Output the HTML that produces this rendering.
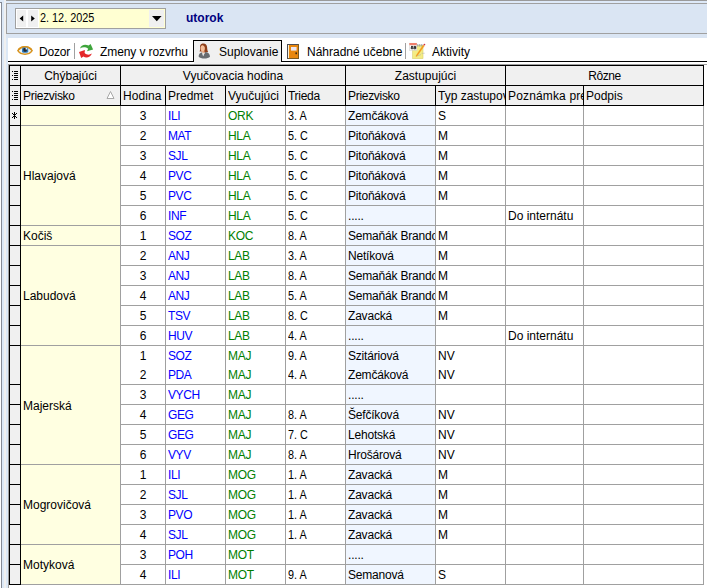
<!DOCTYPE html>
<html><head><meta charset="utf-8"><title>Suplovanie</title>
<style>
html,body{margin:0;padding:0;background:#fff;}
body{width:707px;height:588px;position:relative;overflow:hidden;font-family:"Liberation Sans",sans-serif;font-size:12px;color:#000;}
body>div,body>svg{position:absolute;}
.t{white-space:nowrap;}
.c{text-align:center;}
.clip{overflow:hidden;}
.blue{color:#0000ff;}
.green{color:#008000;}
.tab{font-size:12px;}
</style></head><body>
<div style="left:0px;top:0px;width:707px;height:588px;background:#fff;"></div>
<div style="left:0px;top:0px;width:2px;height:2px;background:#dce8f6;"></div>
<div style="left:0px;top:2px;width:2px;height:1px;background:#858a95;"></div>
<div style="left:1px;top:2px;width:1px;height:586px;background:#858a95;"></div>
<div style="left:2px;top:0px;width:2px;height:588px;background:#dce8f6;"></div>
<div style="left:4px;top:0px;width:2px;height:588px;background:#f0f0f0;"></div>
<div style="left:6px;top:0px;width:2px;height:588px;background:#dce8f6;"></div>
<div style="left:6px;top:0px;width:701px;height:1px;background:#9a9a9a;"></div>
<div style="left:6px;top:1px;width:701px;height:2px;background:#dde9f8;"></div>
<div style="left:6px;top:3px;width:701px;height:1px;background:#a0a0a0;"></div>
<div style="left:6px;top:4px;width:1px;height:30px;background:#a0a0a0;"></div>
<div style="left:7px;top:4px;width:700px;height:29px;background:#dae5f3;"></div>
<div style="left:6px;top:33px;width:701px;height:1px;background:#a0a0a0;"></div>
<div style="left:6px;top:34px;width:701px;height:4px;background:#dae5f3;"></div>
<div style="left:15px;top:8px;width:151px;height:21px;background:#a0a0a0;"></div>
<div style="left:16px;top:9px;width:149px;height:19px;background:#ffffd2;"></div>
<div style="left:16px;top:9px;width:23px;height:19px;background:#fff;"></div>
<div style="left:17px;top:10px;width:9px;height:17px;background:#f0f0f0;"></div>
<div style="left:28px;top:10px;width:10px;height:17px;background:#f0f0f0;"></div>
<div style="left:149px;top:10px;width:15px;height:17px;background:#f0f0f0;"></div>
<svg style="left:0;top:0" width="707" height="40"><path d="M19.6 18.5 L23.2 15.4 L23.2 21.6Z M34.8 18.5 L31.2 15.4 L31.2 21.6Z M152 16 L161.6 16 L156.8 21.2Z" fill="#000"/></svg>
<div class="t " style="left:40px;top:9px;width:100px;height:19px;line-height:19px;font-size:12px;transform:scaleX(0.905);transform-origin:0 0">2. 12. 2025</div>
<div class="t " style="left:186px;top:9px;width:60px;height:19px;line-height:19px;font-weight:bold;color:#000080;font-size:12px">utorok</div>
<div style="left:8px;top:61px;width:699px;height:1px;background:#000;"></div>
<div style="left:193px;top:40px;width:89px;height:22px;background:#000;"></div>
<div style="left:194px;top:41px;width:87px;height:24px;background:#f0f0f0;"></div>
<div style="left:194px;top:62px;width:87px;height:1px;background:#f0f0f0;"></div>
<div style="left:74px;top:43px;width:1px;height:16px;background:#a0a0a0;"></div>
<div style="left:405px;top:43px;width:1px;height:16px;background:#a0a0a0;"></div>
<div class="t tab" style="left:39px;top:43px;width:40px;height:19px;line-height:19px;letter-spacing:-0.2px">Dozor</div>
<div class="t tab" style="left:100px;top:43px;width:100px;height:19px;line-height:19px;letter-spacing:-0.1px">Zmeny v rozvrhu</div>
<div class="t tab" style="left:219px;top:43px;width:70px;height:19px;line-height:19px;">Suplovanie</div>
<div class="t tab" style="left:307px;top:43px;width:100px;height:19px;line-height:19px;">Náhradné učebne</div>
<div class="t tab" style="left:432px;top:43px;width:60px;height:19px;line-height:19px;">Aktivity</div>
<svg style="left:0;top:0" width="707" height="66" viewBox="0 0 707 66">
<!-- eye -->
<path d="M17.9 50.6 C21 45.6 29 45.6 32.1 50.6 C29 55.3 21 55.3 17.9 50.6Z" fill="#e4f1fb" stroke="#d8921c" stroke-width="1.5"/>
<path d="M18.8 49.4 C21.8 46 28.2 46 31.2 49.4" fill="none" stroke="#d8921c" stroke-width="1.6"/>
<rect x="22" y="47.4" width="6.2" height="5.4" rx="1.6" fill="#2f7ec2"/>
<rect x="23.4" y="48" width="3.4" height="3.8" rx="1.2" fill="#23282e"/>
<rect x="25.6" y="47.8" width="1.6" height="1.7" fill="#e8eef4"/>
<!-- refresh -->
<path d="M80.1 48.4 C80.8 45 85.2 43.8 88.6 45.6 L90.6 44 L93.1 49.6 L87 51.2 L88.2 48.7 C85.6 46.9 82.4 47 80.1 48.4Z" fill="#3fa53c"/>
<path d="M91.9 53.6 C90.4 57.6 86 58.3 83.4 56.6 L81.2 57.9 L79 52 L84.9 50 L84.6 53 C86.6 55 89.6 55.1 91.9 53.6Z" fill="#e4282a"/>
<!-- person -->
<path d="M200.2 47.6 C199.6 44.6 201.6 43.4 203.4 43.5 C205.6 43.5 207 45 207.1 47.2 C207.2 49.6 207.6 51 208.2 52 L204.6 52.6 L201.6 51.6 L199.6 51.6 C200.2 50.4 200.4 49 200.2 47.6Z" fill="#8f3f1a"/>
<path d="M200.7 47.2 C200.9 45.6 202.2 45.2 203.2 45.4 C204.4 45.8 205 47 204.9 48.6 C204.8 50.6 203.8 52 202.8 52 C201.6 52 200.5 50 200.7 47.2Z" fill="#f6be98"/>
<path d="M202.2 51.4 L204.4 51 L204.8 53.4 L202.4 54Z" fill="#eaa57c"/>
<path d="M198.7 56.8 C198.6 53.6 200.3 52.6 202.1 52.4 L203.1 56 L205.4 52 C208.4 52.4 210 54.2 210 56.8 C208 59.2 200.6 59.2 198.7 56.8Z" fill="#686c70"/>
<path d="M202.1 52.6 L203.1 56.2 L204.6 53Z" fill="#e4e4e4"/>
<!-- door -->
<rect x="287" y="44" width="12" height="15" fill="#7a5a22"/>
<rect x="287" y="44" width="11" height="1" fill="#4c4c54"/><rect x="287" y="44" width="1" height="15" fill="#4c4c54"/>
<rect x="288" y="45" width="1" height="13" fill="#fbf3d8"/>
<rect x="289" y="45" width="9" height="13" fill="#e8870e"/>
<rect x="291" y="47" width="5.6" height="3.6" fill="#ece6f2"/>
<rect x="295.4" y="52.4" width="1.6" height="1.8" fill="#3a2a10"/>
<!-- notepad -->
<rect x="412.6" y="45.4" width="10.4" height="13.2" fill="#f3ec84" stroke="#d9d070" stroke-width="0.6"/>
<path d="M417.8 44 v2.6 M419.8 44 v2.6 M421.8 44 v2.6" stroke="#8e959c" stroke-width="0.9"/>
<rect x="409.4" y="43.2" width="7.4" height="7" fill="#fff" stroke="#c8c8c8" stroke-width="0.5"/>
<rect x="409.4" y="43" width="7.4" height="2.2" fill="#f0806c"/>
<path d="M411 46.4 h1.8 v1 h-1.6 v1.3 h1.9 M413.8 46.4 h1.9 v2.4 h-1.9 v-1.2 h1.9" fill="none" stroke="#111" stroke-width="0.9"/>
<path d="M423.1 45.1 L424.3 46 L417.2 56 L415.9 56.7 L416.2 55.3Z" fill="#f29a1e" stroke="#f29a1e" stroke-width="0.25"/>
<circle cx="424.4" cy="44.6" r="0.9" fill="#d03040"/>
<path d="M417 56 L421 54.6 M421.6 53.4 L424.8 53.2" stroke="#aaa" stroke-width="0.5"/>
</svg>
<div style="left:8px;top:64px;width:699px;height:1px;background:#a0a0a0;"></div>
<div style="left:8px;top:64px;width:1px;height:524px;background:#a0a0a0;"></div>
<div style="left:9px;top:65px;width:695px;height:41px;background:#000;"></div>
<div style="left:10px;top:66px;width:10px;height:19px;background:#f0f0f0;"></div>
<div style="left:21px;top:66px;width:99px;height:19px;background:#f0f0f0;"></div>
<div style="left:121px;top:66px;width:224px;height:19px;background:#f0f0f0;"></div>
<div style="left:346px;top:66px;width:159px;height:19px;background:#f0f0f0;"></div>
<div style="left:506px;top:66px;width:197px;height:19px;background:#f0f0f0;"></div>
<div style="left:10px;top:86px;width:10px;height:19px;background:#f0f0f0;"></div>
<div style="left:21px;top:86px;width:99px;height:19px;background:#f0f0f0;"></div>
<div style="left:121px;top:86px;width:44px;height:19px;background:#f0f0f0;"></div>
<div style="left:166px;top:86px;width:59px;height:19px;background:#f0f0f0;"></div>
<div style="left:226px;top:86px;width:59px;height:19px;background:#f0f0f0;"></div>
<div style="left:286px;top:86px;width:59px;height:19px;background:#f0f0f0;"></div>
<div style="left:346px;top:86px;width:89px;height:19px;background:#f0f0f0;"></div>
<div style="left:436px;top:86px;width:69px;height:19px;background:#f0f0f0;"></div>
<div style="left:506px;top:86px;width:77px;height:19px;background:#f0f0f0;"></div>
<div style="left:584px;top:86px;width:119px;height:19px;background:#f0f0f0;"></div>
<div class="t c" style="left:21px;top:67px;width:99px;height:19px;line-height:19px;">Chýbajúci</div>
<div class="t c" style="left:121px;top:67px;width:224px;height:19px;line-height:19px;">Vyučovacia hodina</div>
<div class="t c" style="left:346px;top:67px;width:159px;height:19px;line-height:19px;">Zastupujúci</div>
<div class="t c" style="left:506px;top:67px;width:197px;height:19px;line-height:19px;letter-spacing:-0.4px">Rôzne</div>
<div class="t clip" style="left:23px;top:87px;width:97px;height:19px;line-height:19px;letter-spacing:-0.3px">Priezvisko</div>
<div class="t clip" style="left:123px;top:87px;width:42px;height:19px;line-height:19px;letter-spacing:0.1px">Hodina</div>
<div class="t clip" style="left:168px;top:87px;width:57px;height:19px;line-height:19px;letter-spacing:0">Predmet</div>
<div class="t clip" style="left:228px;top:87px;width:57px;height:19px;line-height:19px;letter-spacing:0">Vyučujúci</div>
<div class="t clip" style="left:288px;top:87px;width:57px;height:19px;line-height:19px;letter-spacing:-0.3px">Trieda</div>
<div class="t clip" style="left:348px;top:87px;width:87px;height:19px;line-height:19px;letter-spacing:-0.3px">Priezvisko</div>
<div class="t clip" style="left:438px;top:87px;width:67px;height:19px;line-height:19px;letter-spacing:0">Typ zastupovania</div>
<div class="t clip" style="left:508px;top:87px;width:75px;height:19px;line-height:19px;letter-spacing:0.15px">Poznámka pre</div>
<div class="t clip" style="left:586px;top:87px;width:117px;height:19px;line-height:19px;letter-spacing:0">Podpis</div>
<svg style="left:12px;top:71px" width="8" height="10" shape-rendering="crispEdges"><rect x="2" y="0" width="4" height="1" fill="#000"/><rect x="0" y="0" width="1" height="1" fill="#000"/><rect x="2" y="2" width="4" height="1" fill="#000"/><rect x="2" y="4" width="4" height="1" fill="#000"/><rect x="0" y="4" width="1" height="1" fill="#000"/><rect x="2" y="6" width="4" height="1" fill="#000"/><rect x="2" y="8" width="4" height="1" fill="#000"/><rect x="0" y="8" width="1" height="1" fill="#000"/></svg>
<svg style="left:12px;top:91px" width="8" height="10" shape-rendering="crispEdges"><rect x="2" y="0" width="4" height="1" fill="#000"/><rect x="0" y="0" width="1" height="1" fill="#000"/><rect x="2" y="2" width="4" height="1" fill="#000"/><rect x="2" y="4" width="4" height="1" fill="#000"/><rect x="0" y="4" width="1" height="1" fill="#000"/><rect x="2" y="6" width="4" height="1" fill="#000"/><rect x="2" y="8" width="4" height="1" fill="#000"/><rect x="0" y="8" width="1" height="1" fill="#000"/></svg>
<svg style="left:106px;top:90px" width="10" height="10"><path d="M4.5 1.5 L8 8.5 L1 8.5Z" fill="#fff" stroke="#a8a8a8" stroke-width="1"/></svg>
<div style="left:9px;top:106px;width:695px;height:479px;background:#a0a0a0;"></div>
<div style="left:9px;top:106px;width:12px;height:479px;background:#000;"></div>
<div style="left:21px;top:106px;width:99px;height:19px;background:#ffffe1;"></div>
<div style="left:21px;top:126px;width:99px;height:99px;background:#ffffe1;"></div>
<div class="t clip" style="left:23px;top:127px;width:96px;height:99px;line-height:99px;">Hlavajová</div>
<div style="left:21px;top:226px;width:99px;height:19px;background:#ffffe1;"></div>
<div class="t clip" style="left:23px;top:227px;width:96px;height:19px;line-height:19px;">Kočiš</div>
<div style="left:21px;top:246px;width:99px;height:99px;background:#ffffe1;"></div>
<div class="t clip" style="left:23px;top:247px;width:96px;height:99px;line-height:99px;">Labudová</div>
<div style="left:21px;top:346px;width:99px;height:118px;background:#ffffe1;"></div>
<div class="t clip" style="left:23px;top:347px;width:96px;height:118px;line-height:118px;">Majerská</div>
<div style="left:21px;top:465px;width:99px;height:79px;background:#ffffe1;"></div>
<div class="t clip" style="left:23px;top:466px;width:96px;height:79px;line-height:79px;">Mogrovičová</div>
<div style="left:21px;top:545px;width:99px;height:39px;background:#ffffe1;"></div>
<div class="t clip" style="left:23px;top:546px;width:96px;height:39px;line-height:39px;">Motyková</div>
<div style="left:10px;top:106px;width:10px;height:19px;background:#f0f0f0;"></div>
<div style="left:10px;top:126px;width:10px;height:19px;background:#f0f0f0;"></div>
<div style="left:10px;top:146px;width:10px;height:19px;background:#f0f0f0;"></div>
<div style="left:10px;top:166px;width:10px;height:19px;background:#f0f0f0;"></div>
<div style="left:10px;top:186px;width:10px;height:19px;background:#f0f0f0;"></div>
<div style="left:10px;top:206px;width:10px;height:19px;background:#f0f0f0;"></div>
<div style="left:10px;top:226px;width:10px;height:19px;background:#f0f0f0;"></div>
<div style="left:10px;top:246px;width:10px;height:19px;background:#f0f0f0;"></div>
<div style="left:10px;top:266px;width:10px;height:19px;background:#f0f0f0;"></div>
<div style="left:10px;top:286px;width:10px;height:19px;background:#f0f0f0;"></div>
<div style="left:10px;top:306px;width:10px;height:19px;background:#f0f0f0;"></div>
<div style="left:10px;top:326px;width:10px;height:19px;background:#f0f0f0;"></div>
<div style="left:10px;top:346px;width:10px;height:38px;background:#f0f0f0;"></div>
<div style="left:10px;top:385px;width:10px;height:19px;background:#f0f0f0;"></div>
<div style="left:10px;top:405px;width:10px;height:19px;background:#f0f0f0;"></div>
<div style="left:10px;top:425px;width:10px;height:19px;background:#f0f0f0;"></div>
<div style="left:10px;top:445px;width:10px;height:19px;background:#f0f0f0;"></div>
<div style="left:10px;top:465px;width:10px;height:19px;background:#f0f0f0;"></div>
<div style="left:10px;top:485px;width:10px;height:19px;background:#f0f0f0;"></div>
<div style="left:10px;top:505px;width:10px;height:19px;background:#f0f0f0;"></div>
<div style="left:10px;top:525px;width:10px;height:19px;background:#f0f0f0;"></div>
<div style="left:10px;top:545px;width:10px;height:19px;background:#f0f0f0;"></div>
<div style="left:10px;top:565px;width:10px;height:19px;background:#f0f0f0;"></div>
<svg style="left:12px;top:112px" width="5" height="7" shape-rendering="crispEdges"><path d="M2 0h1v7h-1z M0 1h1v1h-1z M1 2h1v1h-1z M3 2h1v1h-1z M4 1h1v1h-1z M0 5h1v1h-1z M1 4h1v1h-1z M3 4h1v1h-1z M4 5h1v1h-1z" fill="#000"/></svg>
<div style="left:121px;top:106px;width:44px;height:19px;background:#fff;"></div>
<div class="t c" style="left:121px;top:107px;width:44px;height:19px;line-height:19px;">3</div>
<div style="left:166px;top:106px;width:59px;height:19px;background:#fff;"></div>
<div class="t clip blue" style="left:168px;top:107px;width:57px;height:19px;line-height:19px;letter-spacing:-0.4px">ILI</div>
<div style="left:226px;top:106px;width:59px;height:19px;background:#fff;"></div>
<div class="t clip green" style="left:228px;top:107px;width:57px;height:19px;line-height:19px;letter-spacing:-0.3px">ORK</div>
<div style="left:286px;top:106px;width:59px;height:19px;background:#fff;"></div>
<div class="t clip " style="left:288px;top:107px;width:57px;height:19px;line-height:19px;transform:scaleX(0.9);transform-origin:0 0">3. A</div>
<div style="left:346px;top:106px;width:89px;height:19px;background:#f0f6ff;"></div>
<div class="t clip " style="left:348px;top:107px;width:87px;height:19px;line-height:19px;letter-spacing:-0.2px">Zemčáková</div>
<div style="left:436px;top:106px;width:69px;height:19px;background:#fff;"></div>
<div class="t clip " style="left:438px;top:107px;width:67px;height:19px;line-height:19px;">S</div>
<div style="left:506px;top:106px;width:77px;height:19px;background:#fff;"></div>
<div style="left:584px;top:106px;width:119px;height:19px;background:#fff;"></div>
<div style="left:121px;top:126px;width:44px;height:19px;background:#fff;"></div>
<div class="t c" style="left:121px;top:127px;width:44px;height:19px;line-height:19px;">2</div>
<div style="left:166px;top:126px;width:59px;height:19px;background:#fff;"></div>
<div class="t clip blue" style="left:168px;top:127px;width:57px;height:19px;line-height:19px;letter-spacing:-0.4px">MAT</div>
<div style="left:226px;top:126px;width:59px;height:19px;background:#fff;"></div>
<div class="t clip green" style="left:228px;top:127px;width:57px;height:19px;line-height:19px;letter-spacing:-0.3px">HLA</div>
<div style="left:286px;top:126px;width:59px;height:19px;background:#fff;"></div>
<div class="t clip " style="left:288px;top:127px;width:57px;height:19px;line-height:19px;transform:scaleX(0.9);transform-origin:0 0">5. C</div>
<div style="left:346px;top:126px;width:89px;height:19px;background:#f0f6ff;"></div>
<div class="t clip " style="left:348px;top:127px;width:87px;height:19px;line-height:19px;letter-spacing:-0.2px">Pitoňáková</div>
<div style="left:436px;top:126px;width:69px;height:19px;background:#fff;"></div>
<div class="t clip " style="left:438px;top:127px;width:67px;height:19px;line-height:19px;">M</div>
<div style="left:506px;top:126px;width:77px;height:19px;background:#fff;"></div>
<div style="left:584px;top:126px;width:119px;height:19px;background:#fff;"></div>
<div style="left:121px;top:146px;width:44px;height:19px;background:#fff;"></div>
<div class="t c" style="left:121px;top:147px;width:44px;height:19px;line-height:19px;">3</div>
<div style="left:166px;top:146px;width:59px;height:19px;background:#fff;"></div>
<div class="t clip blue" style="left:168px;top:147px;width:57px;height:19px;line-height:19px;letter-spacing:-0.4px">SJL</div>
<div style="left:226px;top:146px;width:59px;height:19px;background:#fff;"></div>
<div class="t clip green" style="left:228px;top:147px;width:57px;height:19px;line-height:19px;letter-spacing:-0.3px">HLA</div>
<div style="left:286px;top:146px;width:59px;height:19px;background:#fff;"></div>
<div class="t clip " style="left:288px;top:147px;width:57px;height:19px;line-height:19px;transform:scaleX(0.9);transform-origin:0 0">5. C</div>
<div style="left:346px;top:146px;width:89px;height:19px;background:#f0f6ff;"></div>
<div class="t clip " style="left:348px;top:147px;width:87px;height:19px;line-height:19px;letter-spacing:-0.2px">Pitoňáková</div>
<div style="left:436px;top:146px;width:69px;height:19px;background:#fff;"></div>
<div class="t clip " style="left:438px;top:147px;width:67px;height:19px;line-height:19px;">M</div>
<div style="left:506px;top:146px;width:77px;height:19px;background:#fff;"></div>
<div style="left:584px;top:146px;width:119px;height:19px;background:#fff;"></div>
<div style="left:121px;top:166px;width:44px;height:19px;background:#fff;"></div>
<div class="t c" style="left:121px;top:167px;width:44px;height:19px;line-height:19px;">4</div>
<div style="left:166px;top:166px;width:59px;height:19px;background:#fff;"></div>
<div class="t clip blue" style="left:168px;top:167px;width:57px;height:19px;line-height:19px;letter-spacing:-0.4px">PVC</div>
<div style="left:226px;top:166px;width:59px;height:19px;background:#fff;"></div>
<div class="t clip green" style="left:228px;top:167px;width:57px;height:19px;line-height:19px;letter-spacing:-0.3px">HLA</div>
<div style="left:286px;top:166px;width:59px;height:19px;background:#fff;"></div>
<div class="t clip " style="left:288px;top:167px;width:57px;height:19px;line-height:19px;transform:scaleX(0.9);transform-origin:0 0">5. C</div>
<div style="left:346px;top:166px;width:89px;height:19px;background:#f0f6ff;"></div>
<div class="t clip " style="left:348px;top:167px;width:87px;height:19px;line-height:19px;letter-spacing:-0.2px">Pitoňáková</div>
<div style="left:436px;top:166px;width:69px;height:19px;background:#fff;"></div>
<div class="t clip " style="left:438px;top:167px;width:67px;height:19px;line-height:19px;">M</div>
<div style="left:506px;top:166px;width:77px;height:19px;background:#fff;"></div>
<div style="left:584px;top:166px;width:119px;height:19px;background:#fff;"></div>
<div style="left:121px;top:186px;width:44px;height:19px;background:#fff;"></div>
<div class="t c" style="left:121px;top:187px;width:44px;height:19px;line-height:19px;">5</div>
<div style="left:166px;top:186px;width:59px;height:19px;background:#fff;"></div>
<div class="t clip blue" style="left:168px;top:187px;width:57px;height:19px;line-height:19px;letter-spacing:-0.4px">PVC</div>
<div style="left:226px;top:186px;width:59px;height:19px;background:#fff;"></div>
<div class="t clip green" style="left:228px;top:187px;width:57px;height:19px;line-height:19px;letter-spacing:-0.3px">HLA</div>
<div style="left:286px;top:186px;width:59px;height:19px;background:#fff;"></div>
<div class="t clip " style="left:288px;top:187px;width:57px;height:19px;line-height:19px;transform:scaleX(0.9);transform-origin:0 0">5. C</div>
<div style="left:346px;top:186px;width:89px;height:19px;background:#f0f6ff;"></div>
<div class="t clip " style="left:348px;top:187px;width:87px;height:19px;line-height:19px;letter-spacing:-0.2px">Pitoňáková</div>
<div style="left:436px;top:186px;width:69px;height:19px;background:#fff;"></div>
<div class="t clip " style="left:438px;top:187px;width:67px;height:19px;line-height:19px;">M</div>
<div style="left:506px;top:186px;width:77px;height:19px;background:#fff;"></div>
<div style="left:584px;top:186px;width:119px;height:19px;background:#fff;"></div>
<div style="left:121px;top:206px;width:44px;height:19px;background:#fff;"></div>
<div class="t c" style="left:121px;top:207px;width:44px;height:19px;line-height:19px;">6</div>
<div style="left:166px;top:206px;width:59px;height:19px;background:#fff;"></div>
<div class="t clip blue" style="left:168px;top:207px;width:57px;height:19px;line-height:19px;letter-spacing:-0.4px">INF</div>
<div style="left:226px;top:206px;width:59px;height:19px;background:#fff;"></div>
<div class="t clip green" style="left:228px;top:207px;width:57px;height:19px;line-height:19px;letter-spacing:-0.3px">HLA</div>
<div style="left:286px;top:206px;width:59px;height:19px;background:#fff;"></div>
<div class="t clip " style="left:288px;top:207px;width:57px;height:19px;line-height:19px;transform:scaleX(0.9);transform-origin:0 0">5. C</div>
<div style="left:346px;top:206px;width:89px;height:19px;background:#f0f6ff;"></div>
<div class="t clip " style="left:348px;top:207px;width:87px;height:19px;line-height:19px;letter-spacing:-0.2px">.....</div>
<div style="left:436px;top:206px;width:69px;height:19px;background:#fff;"></div>
<div style="left:506px;top:206px;width:77px;height:19px;background:#fff;"></div>
<div class="t clip " style="left:508px;top:207px;width:75px;height:19px;line-height:19px;">Do internátu</div>
<div style="left:584px;top:206px;width:119px;height:19px;background:#fff;"></div>
<div style="left:121px;top:226px;width:44px;height:19px;background:#fff;"></div>
<div class="t c" style="left:121px;top:227px;width:44px;height:19px;line-height:19px;">1</div>
<div style="left:166px;top:226px;width:59px;height:19px;background:#fff;"></div>
<div class="t clip blue" style="left:168px;top:227px;width:57px;height:19px;line-height:19px;letter-spacing:-0.4px">SOZ</div>
<div style="left:226px;top:226px;width:59px;height:19px;background:#fff;"></div>
<div class="t clip green" style="left:228px;top:227px;width:57px;height:19px;line-height:19px;letter-spacing:-0.3px">KOC</div>
<div style="left:286px;top:226px;width:59px;height:19px;background:#fff;"></div>
<div class="t clip " style="left:288px;top:227px;width:57px;height:19px;line-height:19px;transform:scaleX(0.9);transform-origin:0 0">8. A</div>
<div style="left:346px;top:226px;width:89px;height:19px;background:#f0f6ff;"></div>
<div class="t clip " style="left:348px;top:227px;width:87px;height:19px;line-height:19px;letter-spacing:-0.2px">Semaňák Brando</div>
<div style="left:436px;top:226px;width:69px;height:19px;background:#fff;"></div>
<div class="t clip " style="left:438px;top:227px;width:67px;height:19px;line-height:19px;">M</div>
<div style="left:506px;top:226px;width:77px;height:19px;background:#fff;"></div>
<div style="left:584px;top:226px;width:119px;height:19px;background:#fff;"></div>
<div style="left:121px;top:246px;width:44px;height:19px;background:#fff;"></div>
<div class="t c" style="left:121px;top:247px;width:44px;height:19px;line-height:19px;">2</div>
<div style="left:166px;top:246px;width:59px;height:19px;background:#fff;"></div>
<div class="t clip blue" style="left:168px;top:247px;width:57px;height:19px;line-height:19px;letter-spacing:-0.4px">ANJ</div>
<div style="left:226px;top:246px;width:59px;height:19px;background:#fff;"></div>
<div class="t clip green" style="left:228px;top:247px;width:57px;height:19px;line-height:19px;letter-spacing:-0.3px">LAB</div>
<div style="left:286px;top:246px;width:59px;height:19px;background:#fff;"></div>
<div class="t clip " style="left:288px;top:247px;width:57px;height:19px;line-height:19px;transform:scaleX(0.9);transform-origin:0 0">3. A</div>
<div style="left:346px;top:246px;width:89px;height:19px;background:#f0f6ff;"></div>
<div class="t clip " style="left:348px;top:247px;width:87px;height:19px;line-height:19px;letter-spacing:-0.2px">Netíková</div>
<div style="left:436px;top:246px;width:69px;height:19px;background:#fff;"></div>
<div class="t clip " style="left:438px;top:247px;width:67px;height:19px;line-height:19px;">M</div>
<div style="left:506px;top:246px;width:77px;height:19px;background:#fff;"></div>
<div style="left:584px;top:246px;width:119px;height:19px;background:#fff;"></div>
<div style="left:121px;top:266px;width:44px;height:19px;background:#fff;"></div>
<div class="t c" style="left:121px;top:267px;width:44px;height:19px;line-height:19px;">3</div>
<div style="left:166px;top:266px;width:59px;height:19px;background:#fff;"></div>
<div class="t clip blue" style="left:168px;top:267px;width:57px;height:19px;line-height:19px;letter-spacing:-0.4px">ANJ</div>
<div style="left:226px;top:266px;width:59px;height:19px;background:#fff;"></div>
<div class="t clip green" style="left:228px;top:267px;width:57px;height:19px;line-height:19px;letter-spacing:-0.3px">LAB</div>
<div style="left:286px;top:266px;width:59px;height:19px;background:#fff;"></div>
<div class="t clip " style="left:288px;top:267px;width:57px;height:19px;line-height:19px;transform:scaleX(0.9);transform-origin:0 0">8. A</div>
<div style="left:346px;top:266px;width:89px;height:19px;background:#f0f6ff;"></div>
<div class="t clip " style="left:348px;top:267px;width:87px;height:19px;line-height:19px;letter-spacing:-0.2px">Semaňák Brando</div>
<div style="left:436px;top:266px;width:69px;height:19px;background:#fff;"></div>
<div class="t clip " style="left:438px;top:267px;width:67px;height:19px;line-height:19px;">M</div>
<div style="left:506px;top:266px;width:77px;height:19px;background:#fff;"></div>
<div style="left:584px;top:266px;width:119px;height:19px;background:#fff;"></div>
<div style="left:121px;top:286px;width:44px;height:19px;background:#fff;"></div>
<div class="t c" style="left:121px;top:287px;width:44px;height:19px;line-height:19px;">4</div>
<div style="left:166px;top:286px;width:59px;height:19px;background:#fff;"></div>
<div class="t clip blue" style="left:168px;top:287px;width:57px;height:19px;line-height:19px;letter-spacing:-0.4px">ANJ</div>
<div style="left:226px;top:286px;width:59px;height:19px;background:#fff;"></div>
<div class="t clip green" style="left:228px;top:287px;width:57px;height:19px;line-height:19px;letter-spacing:-0.3px">LAB</div>
<div style="left:286px;top:286px;width:59px;height:19px;background:#fff;"></div>
<div class="t clip " style="left:288px;top:287px;width:57px;height:19px;line-height:19px;transform:scaleX(0.9);transform-origin:0 0">5. A</div>
<div style="left:346px;top:286px;width:89px;height:19px;background:#f0f6ff;"></div>
<div class="t clip " style="left:348px;top:287px;width:87px;height:19px;line-height:19px;letter-spacing:-0.2px">Semaňák Brando</div>
<div style="left:436px;top:286px;width:69px;height:19px;background:#fff;"></div>
<div class="t clip " style="left:438px;top:287px;width:67px;height:19px;line-height:19px;">M</div>
<div style="left:506px;top:286px;width:77px;height:19px;background:#fff;"></div>
<div style="left:584px;top:286px;width:119px;height:19px;background:#fff;"></div>
<div style="left:121px;top:306px;width:44px;height:19px;background:#fff;"></div>
<div class="t c" style="left:121px;top:307px;width:44px;height:19px;line-height:19px;">5</div>
<div style="left:166px;top:306px;width:59px;height:19px;background:#fff;"></div>
<div class="t clip blue" style="left:168px;top:307px;width:57px;height:19px;line-height:19px;letter-spacing:-0.4px">TSV</div>
<div style="left:226px;top:306px;width:59px;height:19px;background:#fff;"></div>
<div class="t clip green" style="left:228px;top:307px;width:57px;height:19px;line-height:19px;letter-spacing:-0.3px">LAB</div>
<div style="left:286px;top:306px;width:59px;height:19px;background:#fff;"></div>
<div class="t clip " style="left:288px;top:307px;width:57px;height:19px;line-height:19px;transform:scaleX(0.9);transform-origin:0 0">8. C</div>
<div style="left:346px;top:306px;width:89px;height:19px;background:#f0f6ff;"></div>
<div class="t clip " style="left:348px;top:307px;width:87px;height:19px;line-height:19px;letter-spacing:-0.2px">Zavacká</div>
<div style="left:436px;top:306px;width:69px;height:19px;background:#fff;"></div>
<div class="t clip " style="left:438px;top:307px;width:67px;height:19px;line-height:19px;">M</div>
<div style="left:506px;top:306px;width:77px;height:19px;background:#fff;"></div>
<div style="left:584px;top:306px;width:119px;height:19px;background:#fff;"></div>
<div style="left:121px;top:326px;width:44px;height:19px;background:#fff;"></div>
<div class="t c" style="left:121px;top:327px;width:44px;height:19px;line-height:19px;">6</div>
<div style="left:166px;top:326px;width:59px;height:19px;background:#fff;"></div>
<div class="t clip blue" style="left:168px;top:327px;width:57px;height:19px;line-height:19px;letter-spacing:-0.4px">HUV</div>
<div style="left:226px;top:326px;width:59px;height:19px;background:#fff;"></div>
<div class="t clip green" style="left:228px;top:327px;width:57px;height:19px;line-height:19px;letter-spacing:-0.3px">LAB</div>
<div style="left:286px;top:326px;width:59px;height:19px;background:#fff;"></div>
<div class="t clip " style="left:288px;top:327px;width:57px;height:19px;line-height:19px;transform:scaleX(0.9);transform-origin:0 0">4. A</div>
<div style="left:346px;top:326px;width:89px;height:19px;background:#f0f6ff;"></div>
<div class="t clip " style="left:348px;top:327px;width:87px;height:19px;line-height:19px;letter-spacing:-0.2px">.....</div>
<div style="left:436px;top:326px;width:69px;height:19px;background:#fff;"></div>
<div style="left:506px;top:326px;width:77px;height:19px;background:#fff;"></div>
<div class="t clip " style="left:508px;top:327px;width:75px;height:19px;line-height:19px;">Do internátu</div>
<div style="left:584px;top:326px;width:119px;height:19px;background:#fff;"></div>
<div style="left:121px;top:346px;width:44px;height:18px;background:#fff;"></div>
<div class="t c" style="left:121px;top:347px;width:44px;height:19px;line-height:19px;">1</div>
<div style="left:166px;top:346px;width:59px;height:18px;background:#fff;"></div>
<div class="t clip blue" style="left:168px;top:347px;width:57px;height:19px;line-height:19px;letter-spacing:-0.4px">SOZ</div>
<div style="left:226px;top:346px;width:59px;height:18px;background:#fff;"></div>
<div class="t clip green" style="left:228px;top:347px;width:57px;height:19px;line-height:19px;letter-spacing:-0.3px">MAJ</div>
<div style="left:286px;top:346px;width:59px;height:18px;background:#fff;"></div>
<div class="t clip " style="left:288px;top:347px;width:57px;height:19px;line-height:19px;transform:scaleX(0.9);transform-origin:0 0">9. A</div>
<div style="left:346px;top:346px;width:89px;height:18px;background:#f0f6ff;"></div>
<div class="t clip " style="left:348px;top:347px;width:87px;height:19px;line-height:19px;letter-spacing:-0.2px">Szitáriová</div>
<div style="left:436px;top:346px;width:69px;height:18px;background:#fff;"></div>
<div class="t clip " style="left:438px;top:347px;width:67px;height:19px;line-height:19px;">NV</div>
<div style="left:506px;top:346px;width:77px;height:18px;background:#fff;"></div>
<div style="left:584px;top:346px;width:119px;height:18px;background:#fff;"></div>
<div style="left:121px;top:364px;width:44px;height:20px;background:#fff;"></div>
<div class="t c" style="left:121px;top:366px;width:44px;height:19px;line-height:19px;">2</div>
<div style="left:166px;top:364px;width:59px;height:20px;background:#fff;"></div>
<div class="t clip blue" style="left:168px;top:366px;width:57px;height:19px;line-height:19px;letter-spacing:-0.4px">PDA</div>
<div style="left:226px;top:364px;width:59px;height:20px;background:#fff;"></div>
<div class="t clip green" style="left:228px;top:366px;width:57px;height:19px;line-height:19px;letter-spacing:-0.3px">MAJ</div>
<div style="left:286px;top:364px;width:59px;height:20px;background:#fff;"></div>
<div class="t clip " style="left:288px;top:366px;width:57px;height:19px;line-height:19px;transform:scaleX(0.9);transform-origin:0 0">4. A</div>
<div style="left:346px;top:364px;width:89px;height:20px;background:#f0f6ff;"></div>
<div class="t clip " style="left:348px;top:366px;width:87px;height:19px;line-height:19px;letter-spacing:-0.2px">Zemčáková</div>
<div style="left:436px;top:364px;width:69px;height:20px;background:#fff;"></div>
<div class="t clip " style="left:438px;top:366px;width:67px;height:19px;line-height:19px;">NV</div>
<div style="left:506px;top:364px;width:77px;height:20px;background:#fff;"></div>
<div style="left:584px;top:364px;width:119px;height:20px;background:#fff;"></div>
<div style="left:121px;top:385px;width:44px;height:19px;background:#fff;"></div>
<div class="t c" style="left:121px;top:386px;width:44px;height:19px;line-height:19px;">3</div>
<div style="left:166px;top:385px;width:59px;height:19px;background:#fff;"></div>
<div class="t clip blue" style="left:168px;top:386px;width:57px;height:19px;line-height:19px;letter-spacing:-0.4px">VYCH</div>
<div style="left:226px;top:385px;width:59px;height:19px;background:#fff;"></div>
<div class="t clip green" style="left:228px;top:386px;width:57px;height:19px;line-height:19px;letter-spacing:-0.3px">MAJ</div>
<div style="left:286px;top:385px;width:59px;height:19px;background:#fff;"></div>
<div style="left:346px;top:385px;width:89px;height:19px;background:#f0f6ff;"></div>
<div class="t clip " style="left:348px;top:386px;width:87px;height:19px;line-height:19px;letter-spacing:-0.2px">.....</div>
<div style="left:436px;top:385px;width:69px;height:19px;background:#fff;"></div>
<div style="left:506px;top:385px;width:77px;height:19px;background:#fff;"></div>
<div style="left:584px;top:385px;width:119px;height:19px;background:#fff;"></div>
<div style="left:121px;top:405px;width:44px;height:19px;background:#fff;"></div>
<div class="t c" style="left:121px;top:406px;width:44px;height:19px;line-height:19px;">4</div>
<div style="left:166px;top:405px;width:59px;height:19px;background:#fff;"></div>
<div class="t clip blue" style="left:168px;top:406px;width:57px;height:19px;line-height:19px;letter-spacing:-0.4px">GEG</div>
<div style="left:226px;top:405px;width:59px;height:19px;background:#fff;"></div>
<div class="t clip green" style="left:228px;top:406px;width:57px;height:19px;line-height:19px;letter-spacing:-0.3px">MAJ</div>
<div style="left:286px;top:405px;width:59px;height:19px;background:#fff;"></div>
<div class="t clip " style="left:288px;top:406px;width:57px;height:19px;line-height:19px;transform:scaleX(0.9);transform-origin:0 0">8. A</div>
<div style="left:346px;top:405px;width:89px;height:19px;background:#f0f6ff;"></div>
<div class="t clip " style="left:348px;top:406px;width:87px;height:19px;line-height:19px;letter-spacing:-0.2px">Šefčíková</div>
<div style="left:436px;top:405px;width:69px;height:19px;background:#fff;"></div>
<div class="t clip " style="left:438px;top:406px;width:67px;height:19px;line-height:19px;">NV</div>
<div style="left:506px;top:405px;width:77px;height:19px;background:#fff;"></div>
<div style="left:584px;top:405px;width:119px;height:19px;background:#fff;"></div>
<div style="left:121px;top:425px;width:44px;height:19px;background:#fff;"></div>
<div class="t c" style="left:121px;top:426px;width:44px;height:19px;line-height:19px;">5</div>
<div style="left:166px;top:425px;width:59px;height:19px;background:#fff;"></div>
<div class="t clip blue" style="left:168px;top:426px;width:57px;height:19px;line-height:19px;letter-spacing:-0.4px">GEG</div>
<div style="left:226px;top:425px;width:59px;height:19px;background:#fff;"></div>
<div class="t clip green" style="left:228px;top:426px;width:57px;height:19px;line-height:19px;letter-spacing:-0.3px">MAJ</div>
<div style="left:286px;top:425px;width:59px;height:19px;background:#fff;"></div>
<div class="t clip " style="left:288px;top:426px;width:57px;height:19px;line-height:19px;transform:scaleX(0.9);transform-origin:0 0">7. C</div>
<div style="left:346px;top:425px;width:89px;height:19px;background:#f0f6ff;"></div>
<div class="t clip " style="left:348px;top:426px;width:87px;height:19px;line-height:19px;letter-spacing:-0.2px">Lehotská</div>
<div style="left:436px;top:425px;width:69px;height:19px;background:#fff;"></div>
<div class="t clip " style="left:438px;top:426px;width:67px;height:19px;line-height:19px;">NV</div>
<div style="left:506px;top:425px;width:77px;height:19px;background:#fff;"></div>
<div style="left:584px;top:425px;width:119px;height:19px;background:#fff;"></div>
<div style="left:121px;top:445px;width:44px;height:19px;background:#fff;"></div>
<div class="t c" style="left:121px;top:446px;width:44px;height:19px;line-height:19px;">6</div>
<div style="left:166px;top:445px;width:59px;height:19px;background:#fff;"></div>
<div class="t clip blue" style="left:168px;top:446px;width:57px;height:19px;line-height:19px;letter-spacing:-0.4px">VYV</div>
<div style="left:226px;top:445px;width:59px;height:19px;background:#fff;"></div>
<div class="t clip green" style="left:228px;top:446px;width:57px;height:19px;line-height:19px;letter-spacing:-0.3px">MAJ</div>
<div style="left:286px;top:445px;width:59px;height:19px;background:#fff;"></div>
<div class="t clip " style="left:288px;top:446px;width:57px;height:19px;line-height:19px;transform:scaleX(0.9);transform-origin:0 0">8. A</div>
<div style="left:346px;top:445px;width:89px;height:19px;background:#f0f6ff;"></div>
<div class="t clip " style="left:348px;top:446px;width:87px;height:19px;line-height:19px;letter-spacing:-0.2px">Hrošárová</div>
<div style="left:436px;top:445px;width:69px;height:19px;background:#fff;"></div>
<div class="t clip " style="left:438px;top:446px;width:67px;height:19px;line-height:19px;">NV</div>
<div style="left:506px;top:445px;width:77px;height:19px;background:#fff;"></div>
<div style="left:584px;top:445px;width:119px;height:19px;background:#fff;"></div>
<div style="left:121px;top:465px;width:44px;height:19px;background:#fff;"></div>
<div class="t c" style="left:121px;top:466px;width:44px;height:19px;line-height:19px;">1</div>
<div style="left:166px;top:465px;width:59px;height:19px;background:#fff;"></div>
<div class="t clip blue" style="left:168px;top:466px;width:57px;height:19px;line-height:19px;letter-spacing:-0.4px">ILI</div>
<div style="left:226px;top:465px;width:59px;height:19px;background:#fff;"></div>
<div class="t clip green" style="left:228px;top:466px;width:57px;height:19px;line-height:19px;letter-spacing:-0.3px">MOG</div>
<div style="left:286px;top:465px;width:59px;height:19px;background:#fff;"></div>
<div class="t clip " style="left:288px;top:466px;width:57px;height:19px;line-height:19px;transform:scaleX(0.9);transform-origin:0 0">1. A</div>
<div style="left:346px;top:465px;width:89px;height:19px;background:#f0f6ff;"></div>
<div class="t clip " style="left:348px;top:466px;width:87px;height:19px;line-height:19px;letter-spacing:-0.2px">Zavacká</div>
<div style="left:436px;top:465px;width:69px;height:19px;background:#fff;"></div>
<div class="t clip " style="left:438px;top:466px;width:67px;height:19px;line-height:19px;">M</div>
<div style="left:506px;top:465px;width:77px;height:19px;background:#fff;"></div>
<div style="left:584px;top:465px;width:119px;height:19px;background:#fff;"></div>
<div style="left:121px;top:485px;width:44px;height:19px;background:#fff;"></div>
<div class="t c" style="left:121px;top:486px;width:44px;height:19px;line-height:19px;">2</div>
<div style="left:166px;top:485px;width:59px;height:19px;background:#fff;"></div>
<div class="t clip blue" style="left:168px;top:486px;width:57px;height:19px;line-height:19px;letter-spacing:-0.4px">SJL</div>
<div style="left:226px;top:485px;width:59px;height:19px;background:#fff;"></div>
<div class="t clip green" style="left:228px;top:486px;width:57px;height:19px;line-height:19px;letter-spacing:-0.3px">MOG</div>
<div style="left:286px;top:485px;width:59px;height:19px;background:#fff;"></div>
<div class="t clip " style="left:288px;top:486px;width:57px;height:19px;line-height:19px;transform:scaleX(0.9);transform-origin:0 0">1. A</div>
<div style="left:346px;top:485px;width:89px;height:19px;background:#f0f6ff;"></div>
<div class="t clip " style="left:348px;top:486px;width:87px;height:19px;line-height:19px;letter-spacing:-0.2px">Zavacká</div>
<div style="left:436px;top:485px;width:69px;height:19px;background:#fff;"></div>
<div class="t clip " style="left:438px;top:486px;width:67px;height:19px;line-height:19px;">M</div>
<div style="left:506px;top:485px;width:77px;height:19px;background:#fff;"></div>
<div style="left:584px;top:485px;width:119px;height:19px;background:#fff;"></div>
<div style="left:121px;top:505px;width:44px;height:19px;background:#fff;"></div>
<div class="t c" style="left:121px;top:506px;width:44px;height:19px;line-height:19px;">3</div>
<div style="left:166px;top:505px;width:59px;height:19px;background:#fff;"></div>
<div class="t clip blue" style="left:168px;top:506px;width:57px;height:19px;line-height:19px;letter-spacing:-0.4px">PVO</div>
<div style="left:226px;top:505px;width:59px;height:19px;background:#fff;"></div>
<div class="t clip green" style="left:228px;top:506px;width:57px;height:19px;line-height:19px;letter-spacing:-0.3px">MOG</div>
<div style="left:286px;top:505px;width:59px;height:19px;background:#fff;"></div>
<div class="t clip " style="left:288px;top:506px;width:57px;height:19px;line-height:19px;transform:scaleX(0.9);transform-origin:0 0">1. A</div>
<div style="left:346px;top:505px;width:89px;height:19px;background:#f0f6ff;"></div>
<div class="t clip " style="left:348px;top:506px;width:87px;height:19px;line-height:19px;letter-spacing:-0.2px">Zavacká</div>
<div style="left:436px;top:505px;width:69px;height:19px;background:#fff;"></div>
<div class="t clip " style="left:438px;top:506px;width:67px;height:19px;line-height:19px;">M</div>
<div style="left:506px;top:505px;width:77px;height:19px;background:#fff;"></div>
<div style="left:584px;top:505px;width:119px;height:19px;background:#fff;"></div>
<div style="left:121px;top:525px;width:44px;height:19px;background:#fff;"></div>
<div class="t c" style="left:121px;top:526px;width:44px;height:19px;line-height:19px;">4</div>
<div style="left:166px;top:525px;width:59px;height:19px;background:#fff;"></div>
<div class="t clip blue" style="left:168px;top:526px;width:57px;height:19px;line-height:19px;letter-spacing:-0.4px">SJL</div>
<div style="left:226px;top:525px;width:59px;height:19px;background:#fff;"></div>
<div class="t clip green" style="left:228px;top:526px;width:57px;height:19px;line-height:19px;letter-spacing:-0.3px">MOG</div>
<div style="left:286px;top:525px;width:59px;height:19px;background:#fff;"></div>
<div class="t clip " style="left:288px;top:526px;width:57px;height:19px;line-height:19px;transform:scaleX(0.9);transform-origin:0 0">1. A</div>
<div style="left:346px;top:525px;width:89px;height:19px;background:#f0f6ff;"></div>
<div class="t clip " style="left:348px;top:526px;width:87px;height:19px;line-height:19px;letter-spacing:-0.2px">Zavacká</div>
<div style="left:436px;top:525px;width:69px;height:19px;background:#fff;"></div>
<div class="t clip " style="left:438px;top:526px;width:67px;height:19px;line-height:19px;">M</div>
<div style="left:506px;top:525px;width:77px;height:19px;background:#fff;"></div>
<div style="left:584px;top:525px;width:119px;height:19px;background:#fff;"></div>
<div style="left:121px;top:545px;width:44px;height:19px;background:#fff;"></div>
<div class="t c" style="left:121px;top:546px;width:44px;height:19px;line-height:19px;">3</div>
<div style="left:166px;top:545px;width:59px;height:19px;background:#fff;"></div>
<div class="t clip blue" style="left:168px;top:546px;width:57px;height:19px;line-height:19px;letter-spacing:-0.4px">POH</div>
<div style="left:226px;top:545px;width:59px;height:19px;background:#fff;"></div>
<div class="t clip green" style="left:228px;top:546px;width:57px;height:19px;line-height:19px;letter-spacing:-0.3px">MOT</div>
<div style="left:286px;top:545px;width:59px;height:19px;background:#fff;"></div>
<div style="left:346px;top:545px;width:89px;height:19px;background:#f0f6ff;"></div>
<div class="t clip " style="left:348px;top:546px;width:87px;height:19px;line-height:19px;letter-spacing:-0.2px">.....</div>
<div style="left:436px;top:545px;width:69px;height:19px;background:#fff;"></div>
<div style="left:506px;top:545px;width:77px;height:19px;background:#fff;"></div>
<div style="left:584px;top:545px;width:119px;height:19px;background:#fff;"></div>
<div style="left:121px;top:565px;width:44px;height:19px;background:#fff;"></div>
<div class="t c" style="left:121px;top:566px;width:44px;height:19px;line-height:19px;">4</div>
<div style="left:166px;top:565px;width:59px;height:19px;background:#fff;"></div>
<div class="t clip blue" style="left:168px;top:566px;width:57px;height:19px;line-height:19px;letter-spacing:-0.4px">ILI</div>
<div style="left:226px;top:565px;width:59px;height:19px;background:#fff;"></div>
<div class="t clip green" style="left:228px;top:566px;width:57px;height:19px;line-height:19px;letter-spacing:-0.3px">MOT</div>
<div style="left:286px;top:565px;width:59px;height:19px;background:#fff;"></div>
<div class="t clip " style="left:288px;top:566px;width:57px;height:19px;line-height:19px;transform:scaleX(0.9);transform-origin:0 0">9. A</div>
<div style="left:346px;top:565px;width:89px;height:19px;background:#f0f6ff;"></div>
<div class="t clip " style="left:348px;top:566px;width:87px;height:19px;line-height:19px;letter-spacing:-0.2px">Semanová</div>
<div style="left:436px;top:565px;width:69px;height:19px;background:#fff;"></div>
<div class="t clip " style="left:438px;top:566px;width:67px;height:19px;line-height:19px;">S</div>
<div style="left:506px;top:565px;width:77px;height:19px;background:#fff;"></div>
<div style="left:584px;top:565px;width:119px;height:19px;background:#fff;"></div>
</body></html>
